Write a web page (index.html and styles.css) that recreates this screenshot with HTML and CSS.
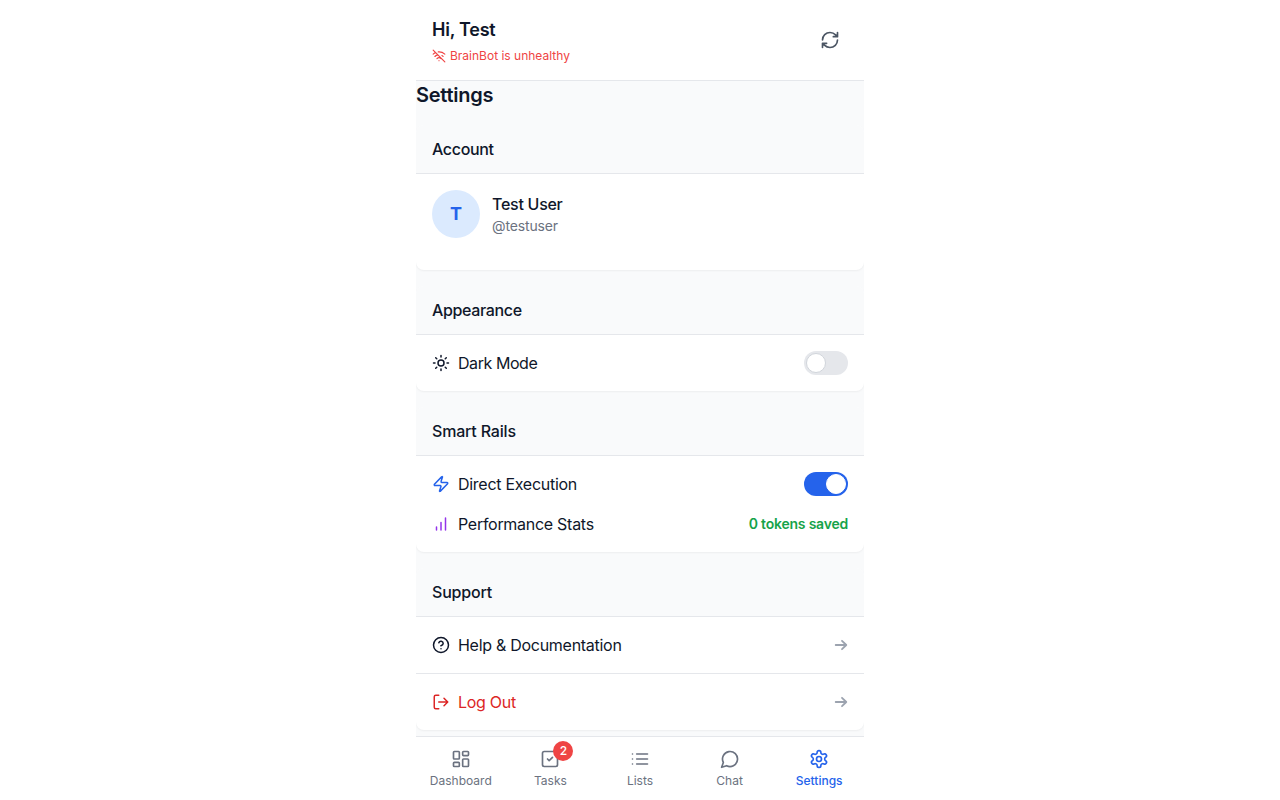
FILE: index.html
```
<!DOCTYPE html>
<html lang="en">
<head>
<meta charset="utf-8">
<title>Settings</title>
<link rel="stylesheet" href="styles.css">
</head>
<body>
<div class="app">
  <header class="header">
    <div>
      <h1 class="greeting">Hi, Test</h1>
      <div class="status">
        <svg class="icon" width="14" height="14" viewBox="0 0 24 24"><path d="M12 20h.01M8.5 16.429a5 5 0 0 1 7 0M5 12.859a10 10 0 0 1 5.17-2.69M19 12.859a10 10 0 0 0-2.007-1.523M2 8.82a15 15 0 0 1 4.177-2.643M22 8.82a15 15 0 0 0-11.288-3.764M2 2l20 20"/></svg>
        <span>BrainBot is unhealthy</span>
      </div>
    </div>
    <button class="refresh" aria-label="Refresh">
      <svg class="icon" width="20" height="20" viewBox="0 0 24 24"><path d="M3 12a9 9 0 0 1 9-9 9.75 9.75 0 0 1 6.74 2.74L21 8M21 3v5h-5M21 12a9 9 0 0 1-9 9 9.75 9.75 0 0 1-6.74-2.74L3 16M8 16H3v5"/></svg>
    </button>
  </header>

  <main class="content">
    <h2 class="title">Settings</h2>

    <section class="card">
      <h3 class="card-title">Account</h3>
      <div class="card-body">
        <div class="profile">
          <div class="avatar">T</div>
          <div>
            <div class="name">Test User</div>
            <div class="handle">@testuser</div>
          </div>
        </div>
      </div>
    </section>

    <section class="card">
      <h3 class="card-title">Appearance</h3>
      <div class="card-body">
        <div class="row">
          <div class="label tight">
            <svg class="icon" width="18" height="18" viewBox="0 0 24 24"><circle cx="12" cy="12" r="4"/><path d="M12 2v2M12 20v2M4.93 4.93l1.41 1.41M17.66 17.66l1.41 1.41M2 12h2M20 12h2M6.34 17.66l-1.41 1.41M19.07 4.93l-1.41 1.41"/></svg>
            <span>Dark Mode</span>
          </div>
          <span class="toggle"></span>
        </div>
      </div>
    </section>

    <section class="card">
      <h3 class="card-title loose">Smart Rails</h3>
      <div class="card-body stack">
        <div class="row">
          <div class="label">
            <svg class="icon blue" width="18" height="18" viewBox="0 0 24 24"><path d="M4 14a1 1 0 0 1-.78-1.63l9.9-10.2a.5.5 0 0 1 .86.46l-1.92 6.02A1 1 0 0 0 13 10h7a1 1 0 0 1 .78 1.63l-9.9 10.2a.5.5 0 0 1-.86-.46l1.92-6.02A1 1 0 0 0 11 14z"/></svg>
            <span>Direct Execution</span>
          </div>
          <span class="toggle on"></span>
        </div>
        <div class="row">
          <div class="label">
            <svg class="icon purple" width="18" height="18" viewBox="0 0 24 24"><path d="M12 20V10M18 20V4M6 20v-4"/></svg>
            <span>Performance Stats</span>
          </div>
          <span class="saved">0 tokens saved</span>
        </div>
      </div>
    </section>

    <section class="card">
      <h3 class="card-title loose">Support</h3>
      <div class="card-body row">
        <div class="label">
          <svg class="icon" width="18" height="18" viewBox="0 0 24 24"><circle cx="12" cy="12" r="10"/><path d="M9.09 9a3 3 0 0 1 5.83 1c0 2-3 3-3 3M12 17h.01"/></svg>
          <span>Help &amp; Documentation</span>
        </div>
        <svg class="icon arrow" width="14" height="14" viewBox="0 0 14 14"><path d="M1.7 7h10.6M8 2.8 12.3 7 8 11.2"/></svg>
      </div>
      <div class="card-body row divided">
        <div class="label red">
          <svg class="icon" width="18" height="18" viewBox="0 0 24 24"><path d="M9 21H5a2 2 0 0 1-2-2V5a2 2 0 0 1 2-2h4M16 17l5-5-5-5M21 12H9"/></svg>
          <span>Log Out</span>
        </div>
        <svg class="icon arrow" width="14" height="14" viewBox="0 0 14 14"><path d="M1.7 7h10.6M8 2.8 12.3 7 8 11.2"/></svg>
      </div>
    </section>
  </main>

  <nav class="nav">
    <a class="tab">
      <svg class="icon" width="20" height="20" viewBox="0 0 24 24"><rect x="3" y="3" width="7" height="9" rx="1"/><rect x="14" y="3" width="7" height="5" rx="1"/><rect x="14" y="12" width="7" height="9" rx="1"/><rect x="3" y="16" width="7" height="5" rx="1"/></svg>
      <span>Dashboard</span>
    </a>
    <a class="tab">
      <span class="badge-wrap">
        <svg class="icon" width="20" height="20" viewBox="0 0 24 24"><rect x="3" y="3" width="18" height="18" rx="2"/><path d="m9 12 2 2 4-4"/></svg>
        <span class="badge">2</span>
      </span>
      <span>Tasks</span>
    </a>
    <a class="tab">
      <svg class="icon" width="20" height="20" viewBox="0 0 24 24"><path d="M8 6h13M8 12h13M8 18h13M3 6h.01M3 12h.01M3 18h.01"/></svg>
      <span>Lists</span>
    </a>
    <a class="tab">
      <svg class="icon" width="20" height="20" viewBox="0 0 24 24"><path d="M7.9 20A9 9 0 1 0 4 16.1L2 22Z"/></svg>
      <span>Chat</span>
    </a>
    <a class="tab active">
      <svg class="icon" width="20" height="20" viewBox="0 0 24 24"><path d="M12.22 2h-.44a2 2 0 0 0-2 2v.18a2 2 0 0 1-1 1.73l-.43.25a2 2 0 0 1-2 0l-.15-.08a2 2 0 0 0-2.73.73l-.22.38a2 2 0 0 0 .73 2.73l.15.1a2 2 0 0 1 1 1.72v.51a2 2 0 0 1-1 1.74l-.15.09a2 2 0 0 0-.73 2.73l.22.38a2 2 0 0 0 2.73.73l.15-.08a2 2 0 0 1 2 0l.43.25a2 2 0 0 1 1 1.73V20a2 2 0 0 0 2 2h.44a2 2 0 0 0 2-2v-.18a2 2 0 0 1 1-1.73l.43-.25a2 2 0 0 1 2 0l.15.08a2 2 0 0 0 2.73-.73l.22-.39a2 2 0 0 0-.73-2.73l-.15-.08a2 2 0 0 1-1-1.74v-.5a2 2 0 0 1 1-1.74l.15-.09a2 2 0 0 0 .73-2.73l-.22-.38a2 2 0 0 0-2.73-.73l-.15.08a2 2 0 0 1-2 0l-.43-.25a2 2 0 0 1-1-1.73V4a2 2 0 0 0-2-2z"/><circle cx="12" cy="12" r="3"/></svg>
      <span>Settings</span>
    </a>
  </nav>
</div>
</body>
</html>
```
FILE: styles.css
```
*, *::after { box-sizing: border-box; }
body {
  margin: 0;
  background: #fff;
  color: #0f172a;
  font: 16px/24px Inter, sans-serif;
}
h1, h2, h3 { margin: 0; }
.icon {
  display: block;
  flex: none;
  fill: none;
  stroke: currentColor;
  stroke-width: 2;
  stroke-linecap: round;
  stroke-linejoin: round;
}
.app {
  display: flex;
  flex-direction: column;
  width: 448px;
  height: 800px;
  margin: 0 auto;
  overflow: hidden;
  background: #f9fafb;
}
.header {
  display: flex;
  align-items: center;
  justify-content: space-between;
  padding: 16px;
  background: #fff;
  border-bottom: 1px solid #e5e7eb;
}
.greeting { font-size: 18px; line-height: 28px; font-weight: 600; letter-spacing: -0.25px; }
.status {
  display: flex;
  align-items: center;
  gap: 4px;
  margin-top: 4px;
  color: #ef4444;
  font-size: 12px;
  line-height: 16px;
}
.refresh {
  padding: 8px;
  border: 0;
  background: none;
  color: #4b5563;
}
.content {
  display: flex;
  flex-direction: column;
  flex: 1;
  gap: 16px;
  min-height: 0;
}
.title { font-size: 20px; line-height: 28px; font-weight: 600; letter-spacing: -0.27px; }
.card {
  overflow: hidden;
  flex: none;
  background: #fff;
  border-radius: 8px;
  box-shadow: 0 1px 2px rgba(0, 0, 0, 0.05);
}
.card-title {
  padding: 12px 16px;
  background: #f9fafb;
  border-bottom: 1px solid #e5e7eb;
  font-size: 16px;
  line-height: 24px;
  font-weight: 500;
  letter-spacing: -0.35px;
}
.card-title.loose { letter-spacing: -0.18px; }
.card-body { padding: 16px; }
.stack { display: flex; flex-direction: column; gap: 16px; }
.row { display: flex; align-items: center; justify-content: space-between; }
.divided { border-top: 1px solid #e5e7eb; }
.profile { display: flex; align-items: center; gap: 12px; margin-bottom: 16px; }
.avatar {
  display: flex;
  align-items: center;
  justify-content: center;
  width: 48px;
  height: 48px;
  border-radius: 50%;
  background: #dbeafe;
  color: #2563eb;
  font-size: 18px;
  font-weight: 700;
}
.name { font-weight: 500; letter-spacing: -0.27px; }
.handle { color: #6b7280; font-size: 14px; line-height: 20px; letter-spacing: -0.14px; }
.label { display: flex; align-items: center; gap: 8px; letter-spacing: -0.28px; }
.label.tight { letter-spacing: -0.43px; }
.blue { color: #2563eb; }
.purple { color: #9333ea; }
.red { color: #dc2626; }
.toggle {
  display: flex;
  width: 44px;
  height: 24px;
  padding: 2px;
  border-radius: 12px;
  background: #e5e7eb;
}
.toggle::after {
  content: "";
  width: 20px;
  height: 20px;
  border: 1px solid #d1d5db;
  border-radius: 50%;
  background: #fff;
}
.toggle.on { justify-content: flex-end; background: #2563eb; }
.toggle.on::after { border-color: #fff; }
.saved { color: #16a34a; font-size: 14px; line-height: 20px; font-weight: 600; letter-spacing: -0.22px; }
.arrow { color: #9ca3af; stroke-width: 1.8; }
.nav {
  display: grid;
  grid-template-columns: repeat(5, 1fr);
  flex: none;
  height: 64px;
  background: #fff;
  border-top: 1px solid #e5e7eb;
}
.tab {
  display: flex;
  flex-direction: column;
  align-items: center;
  justify-content: center;
  gap: 4px;
  color: #6b7280;
  font-size: 12px;
  line-height: 16px;
}
.tab.active { color: #2563eb; font-weight: 500; }
.badge-wrap { position: relative; }
.badge {
  position: absolute;
  top: -8px;
  right: -13px;
  width: 20px;
  height: 20px;
  border-radius: 50%;
  background: #ef4444;
  color: #fff;
  font-size: 12px;
  font-weight: 500;
  line-height: 20px;
  text-align: center;
}
```
